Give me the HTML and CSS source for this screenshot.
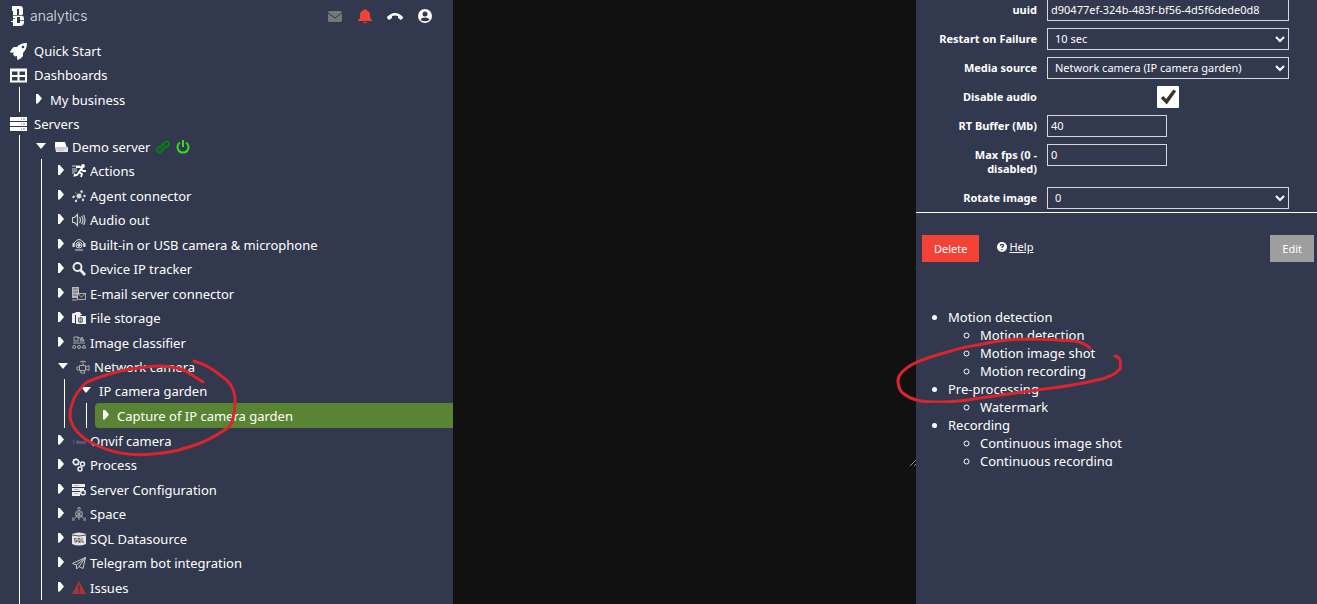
FILE: index.html
```html
<!DOCTYPE html>
<html lang="en">
<head>
<meta charset="utf-8">
<title>Analytics</title>
<link rel="stylesheet" href="styles.css">
</head>
<body>
<div class="app">
  <aside class="sidebar">
    <header class="topbar">
      <svg class="logo" viewBox="0 0 14 22" fill="#fff"><path fill-rule="evenodd" d="M1 1h8q3 0 3 3v5l-1 1q2 1 2 4v3q0 4-4 4H2v-4H0v-1h2V6H1zM6 4v6h2V4zM6 12v6h3v-6z"/><path d="M2 10.500h10M0 13.500h4M9 15.500h5" fill="none" stroke="#32384d" stroke-width=".7"/></svg>
      <span class="brand">analytics</span>
      <nav class="tools">
        <button aria-label="Messages"><svg viewBox="0 0 16 16"><rect x="1" y="3" width="14" height="11" rx="1.500" fill="#777"/><path d="M1 5l7 5 7-5" fill="none" stroke="#32384d" stroke-width="1"/></svg></button>
        <button aria-label="Alerts"><svg viewBox="0 0 16 16" fill="#f44336"><path d="M8 1q1 0 1 1 4 1 4 5v2q0 2 2 3v1H1v-1q2-1 2-3V7q0-4 4-5 0-1 1-1zM6 14h4q-2 2.500-4 0z"/></svg></button>
        <button aria-label="Call"><svg viewBox="0 0 16 16" fill="#fff"><path d="M0 9q8-8 16 0v1l-2 2-3-2V8Q8 7 5 8v2l-3 2-2-2z"/></svg></button>
        <button aria-label="Account"><svg viewBox="0 0 16 16"><circle cx="8" cy="8" r="7" fill="#fff"/><circle cx="8" cy="6" r="2.500" fill="#32384d"/><path d="M3.500 12Q4 9.500 8 9.500t4.500 2.500Q8 14.500 3.500 12z" fill="#32384d"/></svg></button>
      </nav>
    </header>
    <ul class="tree">
      <li><div class="row"><svg class="big" viewBox="0 0 17 17" fill="#fff"><path d="M17 0Q10 0 7 4H4Q3 4 0 9q0 1 4 .5l-1 2 2 2 2-.5q0 4 1 4 4-2 5-4v-3q4-4 4-10z"/><circle cx="13" cy="4" r="1.300" fill="#32384d"/></svg>Quick Start</div></li>
      <li><div class="row"><svg class="big" viewBox="0 0 17 17" fill="none" stroke="#fff" stroke-width="2"><path d="M1 2.500h15v12H1zM8.500 3v11M1 9h15"/><path d="M0 3.500h17"/></svg>Dashboards</div>
        <ul class="branch"><li><div class="row tall"><i class="caret"></i>My business</div></li></ul>
      </li>
      <li><div class="row"><svg class="big" viewBox="0 0 17 17"><path d="M0 1h17v4H0zM0 6h17v4H0zM0 11h17v4H0z" fill="#fff"/><path d="M11 3h1m1 0h2M11 8h1m1 0h2M11 13h1m1 0h2" stroke="#777"/></svg>Servers</div>
        <ul class="branch trunk">
          <li><div class="row"><i class="caret open"></i><svg viewBox="0 0 14 14"><path d="M1 2h10l2 6H1z" fill="#fff"/><path d="M1 7h13v5H2z" fill="#e4e4e8"/><path d="M1 8h12M3 10h7" stroke="#999" stroke-width=".6"/></svg>Demo server
            <svg class="status" viewBox="0 0 14 14" fill="none" stroke="#087b18" stroke-width="2"><path d="M6 9Q4 7 6 5l3-3q2-1 3 0 2 2 0 4l-2 2M8 5q2 2 0 4l-3 3q-2 1-3 0-2-2 0-4l2-2"/></svg>
            <svg class="status" viewBox="0 0 14 14" fill="none" stroke="#35df20" stroke-width="2"><path d="M4 2.500a5.500 5.500 0 1 0 6 0M7 0v7"/></svg></div>
            <ul class="branch nested">
              <li><div class="row"><i class="caret"></i><svg viewBox="0 0 14 14" fill="none" stroke="#fff" stroke-width="1.800"><circle cx="11" cy="2" r="1" fill="#fff"/><path d="M4 3h4l2 1-3 4 3 2-1 3M7 8l-2 3H2M9 5l2 2h3"/><path d="M0 2h8M0 5h5M0 7h5M0 9h3M1 12h3" stroke-width=".8"/></svg>Actions</div></li>
              <li><div class="row"><i class="caret"></i><svg viewBox="0 0 14 14" fill="#ddd"><path d="M7 7L3 3m4 4l4-4M7 7H1m6 0l5 3M7 7l-3 5" stroke="#999" stroke-width=".7"/><circle cx="7" cy="7" r="2.400"/><circle cx="9.500" cy="2.500" r="1.200"/><circle cx="1.500" cy="8" r="1.200"/><circle cx="12.500" cy="7" r="1.200"/><circle cx="4" cy="12" r="1.200"/><circle cx="11" cy="11" r="1.200"/></svg>Agent connector</div></li>
              <li><div class="row"><i class="caret"></i><svg viewBox="0 0 14 14" fill="none" stroke="#ccc" stroke-width="1.200"><path d="M.5 4.500h2l3-3v11l-3-3h-2zM7.500 4q2 3 0 6M9.500 3q3 4 0 8M11.500 2q3 5 0 10"/></svg>Audio out</div></li>
              <li><div class="row"><i class="caret"></i><svg viewBox="0 0 14 14" fill="none" stroke="#ddd"><circle cx="7" cy="7" r="3"/><circle cx="7" cy="7" r="1.300" fill="#ddd"/><path d="M2 9V5q5-7 10 0v4M3 12h8"/><path d="M1.500 5v4m11-4v4" stroke-width="2"/></svg>Built-in or USB camera &amp; microphone</div></li>
              <li><div class="row"><i class="caret"></i><svg viewBox="0 0 14 14" fill="none" stroke="#eee"><circle cx="5.500" cy="5" r="4" stroke-width="1.900"/><path d="M8.500 8l4.500 5" stroke-width="2.700"/></svg>Device IP tracker</div></li>
              <li><div class="row"><i class="caret"></i><svg viewBox="0 0 14 14"><path d="M0 0h7v11H0z" fill="#bbb"/><path d="M1 2h5M1 5h5M1 8h5" stroke="#32384d" stroke-width=".7"/><path d="M5.500 6.500h8v6h-8zl4 3.500 4-3.500M0 13h5" fill="#32384d" stroke="#ccc" stroke-width=".8"/></svg>E-mail server connector</div></li>
              <li><div class="row"><i class="caret"></i><svg viewBox="0 0 14 14" fill="#eee"><path d="M0 3l1-1h2l1-1h4l1 2h1v1H3v8H0z"/><path d="M4 4h4l1 1h5v8H4z"/><path d="M6.500 7h4v4h-4zM8 6.500h1v5H8z" fill="none" stroke="#555" stroke-width=".8"/></svg>File storage</div></li>
              <li><div class="row"><i class="caret"></i><svg viewBox="0 0 14 14" fill="none" stroke="#bbb" stroke-width=".9"><path d="M2 1h4v4H2zM8 5l2-4 2 4zM6 1l6 4M1 7h12M10 12l2-3 2 3z"/><circle cx="2.200" cy="11" r="1.500"/><circle cx="7" cy="11" r="1.500"/></svg>Image classifier</div></li>
              <li><div class="row"><i class="caret open"></i><svg viewBox="0 0 14 14" fill="none" stroke="#aaa"><path d="M4 2q3-2 6 0M7 2v3M3.500 5.500h6v5h-6zM10 7l3-1.500v5L10 9M3 7H1v3h2M5 11l-1 2m4-2l1 2M5 13h4"/></svg>Network camera</div>
                <ul class="branch nested deep">
                  <li><div class="row"><i class="caret open"></i>IP camera garden</div>
                    <ul class="branch nested"><li><div class="row tall active"><i class="caret"></i>Capture of IP camera garden</div></li></ul>
                  </li>
                </ul>
              </li>
              <li><div class="row"><i class="caret"></i><svg viewBox="0 0 14 14" fill="none"><path d="M3 5Q0 7 2 10" stroke="#405da0"/><path d="M5 10V7h2v3m2-3v3m2-3v3m2-3v3" stroke="#777"/></svg>Onvif camera</div></li>
              <li><div class="row"><i class="caret"></i><svg viewBox="0 0 14 14" fill="none" stroke="#eee" stroke-width="1.500"><circle cx="4" cy="4" r="2.600"/><circle cx="10.500" cy="6" r="2"/><circle cx="8" cy="11" r="2"/><path d="M4 0v1m0 6v1M0 4h1m6 0h1M1 1l1 1m4 4l1 1" stroke-width="1"/></svg>Process</div></li>
              <li><div class="row"><i class="caret"></i><svg viewBox="0 0 14 14"><path d="M0 1h13v3H0zM0 5h12v3H0zM0 9h8v4H0z" fill="#eee"/><path d="M2 2.500h5M2 6.500h5M2 10.500h4" stroke="#888" stroke-width=".6"/><circle cx="11" cy="9.500" r="2.300" fill="#32384d" stroke="#eee" stroke-width="1.400"/></svg>Server Configuration</div></li>
              <li><div class="row"><i class="caret"></i><svg viewBox="0 0 14 14" fill="none" stroke="#aaa" stroke-width=".9"><circle cx="7" cy="7" r="3.500"/><path d="M7 1v12M7 8l-6 4m6-4l6 4M4 5l6 4m0-4L4 9M5 2l2-2 2 2M0 10v3h3m8 0h3v-3"/></svg>Space</div></li>
              <li><div class="row"><i class="caret"></i><svg viewBox="0 0 14 14"><path d="M0 2q7-3 14 0v10q-7 3-14 0z" fill="#e4e4e4"/><path d="M0 3q7 2 14 0" fill="none" stroke="#555"/><path d="M4.500 6.500h-2v1.800h2V10h-2M6 6.500h2V10H6zM7 9l1.500 2M10 6v4h2" fill="none" stroke="#444" stroke-width=".8"/></svg>SQL Datasource</div></li>
              <li><div class="row"><i class="caret"></i><svg viewBox="0 0 14 14" fill="none" stroke="#ccc"><path d="M.5 7.500l13-6-2.500 11-4-2-2.500 2.500v-4zM4.500 9l9-7.500L7 10.500"/></svg>Telegram bot integration</div></li>
              <li><div class="row"><i class="caret"></i><svg viewBox="0 0 14 14"><path d="M7 0l7 13H0z" fill="#a83535"/><path d="M7 4v5m0 1v1.500" stroke="#32384d" stroke-width="1.300"/></svg>Issues</div></li>
            </ul>
          </li>
        </ul>
      </li>
    </ul>
  </aside>

  <main class="viewer"><div class="stage"><svg class="grip" viewBox="0 0 6 6" stroke="#aaa" stroke-width=".8"><path d="M0 6l6-6M4 6l2-2"/></svg></div></main>

  <section class="panel">
    <form class="settings">
      <label for="uuid">uuid</label><input id="uuid" type="text" value="d90477ef-324b-483f-bf56-4d5f6dede0d8">
      <label for="restart">Restart on Failure</label><select id="restart"><option>10 sec</option></select>
      <label for="source">Media source</label><select id="source"><option>Network camera (IP camera garden)</option></select>
      <label for="mute">Disable audio</label><input id="mute" type="checkbox" checked>
      <label for="buffer">RT Buffer (Mb)</label><input id="buffer" class="short" type="text" value="40">
      <label for="fps">Max fps (0 - disabled)</label><input id="fps" class="short" type="text" value="0">
      <label for="rotate">Rotate image</label><select id="rotate"><option>0</option></select>
    </form>
    <div class="actions">
      <button class="btn delete">Delete</button>
      <a class="help" href="#"><svg viewBox="0 0 10 10"><circle cx="5" cy="5" r="5" fill="#fff"/><path d="M3.300 3.800Q3.500 2.300 5 2.300t1.600 1.300Q6.600 4.500 5 5v1m0 1v1.200" fill="none" stroke="#32384d" stroke-width="1.300"/></svg><span>Help</span></a>
      <button class="btn edit">Edit</button>
    </div>
    <ul class="modules">
      <li>Motion detection
        <ul><li>Motion detection</li><li>Motion image shot</li><li>Motion recording</li></ul></li>
      <li>Pre-processing
        <ul><li>Watermark</li></ul></li>
      <li>Recording
        <ul><li>Continuous image shot</li><li>Continuous recording</li></ul></li>
    </ul>
  </section>

  <svg class="mark mark-camera" viewBox="0 0 174 104"><path d="M127 6q14 4 26 14 14 9 15 22 1 16-5 29-10 8-27 16-27 11-50 12-31 3-55-8Q6 80 3 62 3 42 20 27 48 15 79 12q20-3 38 3l19 12"/></svg>
  <svg class="mark mark-motion" viewBox="0 0 230 66"><path d="M195 8q-7-6-16-7-24-2-50-2-25 1-46 6-15 2-27 6Q30 18 18 24 2 33 3 42q1 9 6 12 11 9 36 8 18 0 40-4l72-10q24-3 45-8 16-3 23-11 2-12-5-13" transform="translate(0 3)"/></svg>
</div>
</body>
</html>
```
FILE: styles.css
```css
* { box-sizing: border-box; }
body { margin: 0; background: #111; color: #fff; font: 13px/18px "Noto Sans", sans-serif; }
ul { margin: 0; padding: 0; }
button { font: inherit; border: 0; color: #fff; }
.app { position: relative; display: grid; grid-template-columns: 453px 1fr 401px; height: 100vh; min-width: 1000px; overflow: hidden; }

.sidebar { background: #32384d; overflow: hidden; }
.topbar { display: flex; align-items: center; height: 39px; padding: 0 20px 8px 11px; }
.logo { width: 14px; height: 22px; }
.brand { margin-left: 5px; font: 300 14px/20px Inter, sans-serif; color: #dfe1e8; }
.tools { display: flex; gap: 14px; margin-left: auto; }
.tools button { display: block; padding: 0; background: none; }
.tools svg { display: block; width: 16px; height: 16px; }

.tree, .branch { list-style: none; }
.row { display: flex; align-items: center; height: 24px; white-space: nowrap; }
.row svg { flex: none; width: 14px; height: 14px; margin-right: 4px; }
.row .big { width: 17px; height: 17px; margin: 0 7px 0 10px; }
.row .status { margin: 0 0 0 6px; }
.row.tall, .nested > li:nth-child(even) > .row { height: 25px; }
.branch { margin-left: 19px; padding-left: 8px; border-left: 1px solid #fff; }
.branch.trunk { margin-top: -1px; padding-bottom: 24px; }
.branch.nested { margin-left: 13px; }
.branch.deep { margin-left: 14px; }
.branch .row { padding-left: 8px; }
.caret { width: 6px; height: 10px; margin: 0 8px 2px 0; background: #fff; clip-path: polygon(0 0, 30% 0, 100% 50%, 30% 100%, 0 100%); }
.caret.open { width: 10px; height: 6px; clip-path: polygon(0 0, 100% 0, 50% 100%); }
.active { background: #598433; border-radius: 4px 0 0 4px; }

.viewer { background: #111; }
.stage { position: relative; height: 468px; }
.grip { position: absolute; right: 0; bottom: 2px; width: 6px; height: 6px; }

.panel { background: #32384d; overflow: hidden; }
.settings { display: grid; grid-template-columns: 105px 1fr; gap: 7px 10px; align-items: start; margin-top: -1px; padding: 0 28px 3px 16px; border-bottom: 1px solid #fff; font-size: 11px; line-height: 14px; }
.settings label { padding: 4px 0; text-align: right; font-weight: 700; }
.settings input, .settings select { width: 100%; height: 22px; margin: 0; padding: 0 3px 1px; border: 1px solid #d5d7dd; border-radius: 0; background: #32384d; color: #fff; font: 11px/14px "Noto Sans", sans-serif; }
.settings .short { width: 120px; }
.settings input[type="checkbox"] { appearance: none; justify-self: center; width: 22px; padding: 2px; border: 0; border-radius: 1px; background: #fff; }
.settings input[type="checkbox"]:checked::before { content: ""; display: block; height: 18px; background: #333; clip-path: polygon(10% 57%, 24% 44%, 40% 61%, 80% 8%, 95% 18%, 43% 92%); }
.actions { display: flex; align-items: flex-start; margin-top: 22px; padding: 0 3px 0 6px; font-size: 11px; }
.btn { height: 27px; padding: 1px 12px 0; font-size: 11px; }
.delete { background: #f44336; }
.edit { margin-left: auto; background: #9e9e9e; }
.help { display: flex; align-items: center; gap: 2px; margin: 3px 0 0 18px; color: #fff; text-decoration: none; }
.help span { text-decoration: underline; }
.help svg { width: 10px; height: 10px; }
.modules { max-height: 158px; margin-top: 46px; padding-left: 32px; overflow: hidden; }
.modules ul { padding-left: 32px; list-style: circle; }

.mark { position: absolute; fill: none; stroke: #d9252e; stroke-width: 3; stroke-linecap: round; stroke-linejoin: round; pointer-events: none; }
.mark-camera { left: 67px; top: 355px; width: 174px; height: 104px; }
.mark-motion { left: 895px; top: 337px; width: 230px; height: 66px; }
```
